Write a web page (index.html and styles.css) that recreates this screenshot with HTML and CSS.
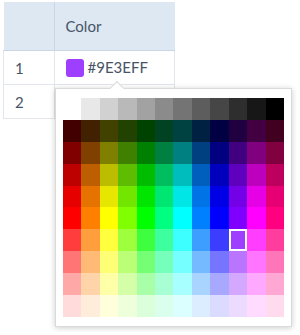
FILE: index.html
```html
<!DOCTYPE html>
<html lang="en">
<head>
  <meta charset="UTF-8">
  <meta name="viewport" content="width=device-width, initial-scale=1.0">
  <title>Color editor</title>
  <link rel="stylesheet" href="styles.css">
</head>
<body>
  <div class="board">
    <table class="datatable">
      <thead>
        <tr>
          <th class="col-id"></th>
          <th class="col-color">Color</th>
        </tr>
      </thead>
      <tbody>
        <tr>
          <td>1</td>
          <td><span class="swatch"></span>#9E3EFF</td>
        </tr>
        <tr>
          <td>2</td>
          <td></td>
        </tr>
      </tbody>
    </table>

    <div class="color-popup">
      <div class="palette" id="palette"></div>
    </div>
  </div>

  <script>
    // 12 hues x (1 gray row + 9 lightness rows)
    const cols = 12;
    const lightness = [0.13, 0.25, 0.37, 0.45, 0.5, 0.62, 0.73, 0.83, 0.93];
    const selectedColor = "#9E3EFF";
    const paletteBox = document.getElementById("palette");

    function hex(n) {
      return Math.round(n).toString(16).padStart(2, "0");
    }

    function hsl(h, l) {
      const q = l < 0.5 ? l * 2 : 1;
      const p = 2 * l - q;
      const channel = t => {
        t = (t + 360) % 360;
        if (t < 60) return p + (q - p) * t / 60;
        if (t < 180) return q;
        if (t < 240) return p + (q - p) * (240 - t) / 60;
        return p;
      };
      return "#" + hex(channel(h + 120) * 255) + hex(channel(h) * 255) + hex(channel(h - 120) * 255);
    }

    function addCell(color, isSelected) {
      const cell = document.createElement("div");
      cell.className = isSelected ? "cell selected" : "cell";
      cell.style.background = color;
      paletteBox.appendChild(cell);
    }

    for (let i = 0; i < cols; i++) {
      addCell("#" + hex(255 * (1 - i / (cols - 1))).repeat(3), false);
    }

    lightness.forEach((l, row) => {
      for (let i = 0; i < cols; i++) {
        const isSelected = row === 5 && i === 9;
        addCell(isSelected ? selectedColor : hsl(i * 30, l), isSelected);
      }
    });
  </script>
</body>
</html>
```

FILE: styles.css
```css
body {
  margin: 2px 3px;
  font-family: Lato, "Noto Sans", sans-serif;
  font-size: 15px;
  color: #475466;
  background: #fff;
}
.board {
  position: relative;
  min-height: 330px;
}
.datatable {
  border-collapse: collapse;
  table-layout: fixed;
}
.datatable th, .datatable td {
  padding: 0 0 0 11px;
  text-align: left;
  font-weight: normal;
  white-space: nowrap;
}
.datatable th {
  height: 48px;
  background-color: #dde8f2;
  border-bottom: 1px solid #c9d6e3;
}
.datatable td {
  height: 33px;
  border-bottom: 1px solid #e3e6ea;
}
.col-id {
  width: 39px;
}
.col-color {
  width: 109px;
}
.datatable th:first-child {
  border-right: 1px solid #c9d6e3;
}
.datatable td:first-child {
  border-left: 1px solid #e3e6ea;
  border-right: 1px solid #e3e6ea;
}
.datatable td:last-child {
  border-right: 1px solid #e3e6ea;
}
.swatch {
  display: inline-block;
  width: 18px;
  height: 18px;
  margin-right: 4px;
  border-radius: 3px;
  background-color: #9e3eff;
  vertical-align: -4px;
}

/* palette popup */
.color-popup {
  position: absolute;
  left: 52px;
  top: 86px;
  padding: 9px 7px;
  background: #fff;
  border: 1px solid #dadada;
  box-shadow: 0 1px 6px rgba(0, 0, 0, 0.2);
}
.color-popup::before {
  content: "";
  position: absolute;
  left: 56px;
  top: -6px;
  width: 9px;
  height: 9px;
  background: #fff;
  border-top: 1px solid #dadada;
  border-left: 1px solid #dadada;
  transform: rotate(45deg);
}
.palette {
  display: grid;
  grid-template-columns: repeat(12, 1fr);
  grid-template-rows: repeat(10, 1fr);
  width: 221px;
  height: 219px;
}
.cell.selected {
  box-shadow: inset 0 0 0 2px #fff;
}
```
